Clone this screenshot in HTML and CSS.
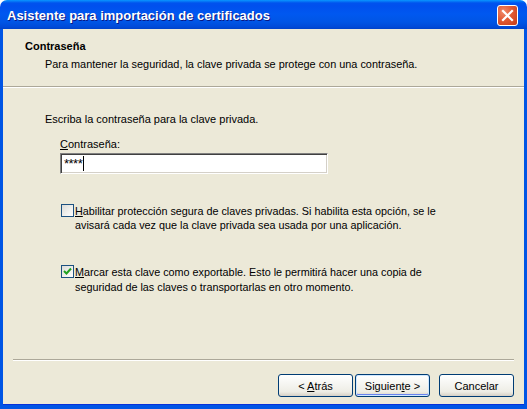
FILE: index.html
```html
<!DOCTYPE html>
<html lang="es">
<head>
  <meta charset="UTF-8" />
  <title>Asistente para importación de certificados</title>
  <link rel="stylesheet" href="styles.css">
</head>
<body>

<div class="window">
  <div class="titlebar">
    <span class="title">Asistente para importación de certificados</span>
    <button class="close-btn" aria-label="Cerrar">
      <svg width="13" height="13" viewBox="0 0 13 13">
        <path d="M2 2 L11 11 M11 2 L2 11" stroke="#fff" stroke-width="2.2" stroke-linecap="square" />
      </svg>
    </button>
  </div>

  <div class="frame">
    <!-- Cabecera del asistente -->
    <div class="wizard-header">
      <div class="header-title">Contraseña</div>
      <div class="header-sub">Para mantener la seguridad, la clave privada se protege con una contraseña.</div>
    </div>

    <div class="wizard-body">
      <p class="intro">Escriba la contraseña para la clave privada.</p>

      <div class="field">
        <label for="pwd"><u>C</u>ontraseña:</label>
        <div class="textbox" id="pwd"><span class="stars">****</span><span class="caret"></span></div>
      </div>

      <div class="check-row first">
        <span class="checkbox"></span>
        <span class="check-text"><u>H</u>abilitar protección segura de claves privadas. Si habilita esta opción, se le<br>avisará cada vez que la clave privada sea usada por una aplicación.</span>
      </div>

      <div class="check-row second">
        <span class="checkbox checked">
          <svg width="9" height="9" viewBox="0 0 9 9">
            <path d="M1 4 L3.5 6.5 L8 1.5" stroke="#21a121" stroke-width="2" fill="none" />
          </svg>
        </span>
        <span class="check-text"><u>M</u>arcar esta clave como exportable. Esto le permitirá hacer una copia de<br>seguridad de las claves o transportarlas en otro momento.</span>
      </div>
    </div>

    <div class="wizard-footer">
      <div class="buttons">
        <button class="btn">&lt; <u>A</u>trás</button>
        <button class="btn default">Siguien<u>t</u>e &gt;</button>
        <button class="btn cancel">Cancelar</button>
      </div>
    </div>
  </div>
</div>

</body>
</html>
```

FILE: styles.css
```css
:root {
  --face: #ece9d8;
  --xp-blue: #0055e5;
  --xp-dark: #0831d9;
  --text: #000;
}

* {
  box-sizing: border-box;
}

body {
  margin: 0;
  padding: 0;
  background: #fff;
  font-family: "Liberation Sans", Arial, sans-serif;
  font-size: 11px;
  color: var(--text);
}

.window {
  width: 527px;
  height: 409px;
  display: flex;
  flex-direction: column;
}

.titlebar {
  height: 29px;
  flex: none;
  display: flex;
  align-items: center;
  justify-content: space-between;
  padding: 0 9px 0 7px;
  border-radius: 7px 7px 0 0;
  background: linear-gradient(to bottom, #0997ff 0px, #0053ee 3px, #0050ee 6px, #0058f0 14px, #0055e5 22px, #004ad8 27px, #0042c8 29px);
}

.title {
  color: #fff;
  font-weight: bold;
  font-size: 13px;
  text-shadow: 1px 1px 0 #0a1883;
  padding-top: 1px;
}

.close-btn {
  width: 21px;
  height: 21px;
  padding: 0;
  border: 1px solid #fff;
  border-radius: 3px;
  background: radial-gradient(circle at 30% 30%, #f08a6a 0%, #e15a34 45%, #c63b17 100%);
  display: flex;
  align-items: center;
  justify-content: center;
  margin-top: 1px;
}

.frame {
  flex: 1;
  display: flex;
  flex-direction: column;
  background: var(--face);
  border-left: 3px solid var(--xp-blue);
  border-right: 3px solid var(--xp-blue);
  border-bottom: 4px solid var(--xp-blue);
  box-shadow: inset 0 -1px 0 #0831d9;
}

.wizard-header {
  height: 58px;
  padding: 11px 0 0 22px;
  border-bottom: 1px solid #aca899;
  box-shadow: 0 1px 0 #fff;
}

.header-title {
  font-weight: bold;
  line-height: 13px;
}

.header-sub {
  line-height: 13px;
  margin-top: 5px;
  padding-left: 20px;
  font-size: 10.9px;
}

.wizard-body {
  flex: 1;
  padding: 26px 0 0 42px;
}

.intro {
  margin: 0;
  line-height: 13px;
}

.field {
  margin: 12px 0 0 15px;
}

.field label {
  display: block;
  line-height: 13px;
  margin-bottom: 2px;
}

.textbox {
  width: 268px;
  height: 21px;
  background: #fff;
  border: 1px solid;
  border-color: #808080 #fff #fff #808080;
  box-shadow: inset 1px 1px 0 #404040, inset -1px -1px 0 #d4d0c8;
  padding: 2px 0 0 3px;
  display: flex;
  align-items: flex-start;
  line-height: 15px;
}

.stars {
  font-size: 13px;
  letter-spacing: -0.5px;
}

.caret {
  display: inline-block;
  width: 1px;
  height: 15px;
  background: #000;
  margin-left: 1px;
}

.check-row {
  display: flex;
  align-items: flex-start;
  margin-left: 16px;
}

.check-row.first {
  margin-top: 30px;
}

.check-row.second {
  margin-top: 33px;
}

.checkbox {
  width: 13px;
  height: 13px;
  flex: none;
  border: 1px solid #1c5180;
  background: linear-gradient(135deg, #dcdcd7 0%, #f2f2ef 60%, #fff 100%);
  display: flex;
  align-items: center;
  justify-content: center;
  margin-right: 1px;
}

.check-text {
  line-height: 14px;
  font-size: 10.8px;
}

.check-row.second .check-text {
  line-height: 15px;
}

.wizard-footer {
  height: 46px;
  flex: none;
  margin: 0 10px;
  border-top: 1px solid #aca899;
  box-shadow: inset 0 1px 0 #fff;
  padding-top: 14px;
}

.buttons {
  display: flex;
  justify-content: flex-end;
}

.btn {
  width: 75px;
  height: 23px;
  font-family: "Liberation Sans", Arial, sans-serif;
  font-size: 11px;
  color: #000;
  border: 1px solid #003c74;
  border-radius: 3px;
  background: linear-gradient(to bottom, #fff 0%, #f6f6f2 40%, #eeede5 80%, #d6d0c5 100%);
  padding: 0;
  margin-left: 2px;
}

.btn.default {
  box-shadow: inset 0 0 0 1px #cee7ff, inset 0 -1px 0 1px #6982ee;
}

.btn.cancel {
  margin-left: 9px;
}
```
